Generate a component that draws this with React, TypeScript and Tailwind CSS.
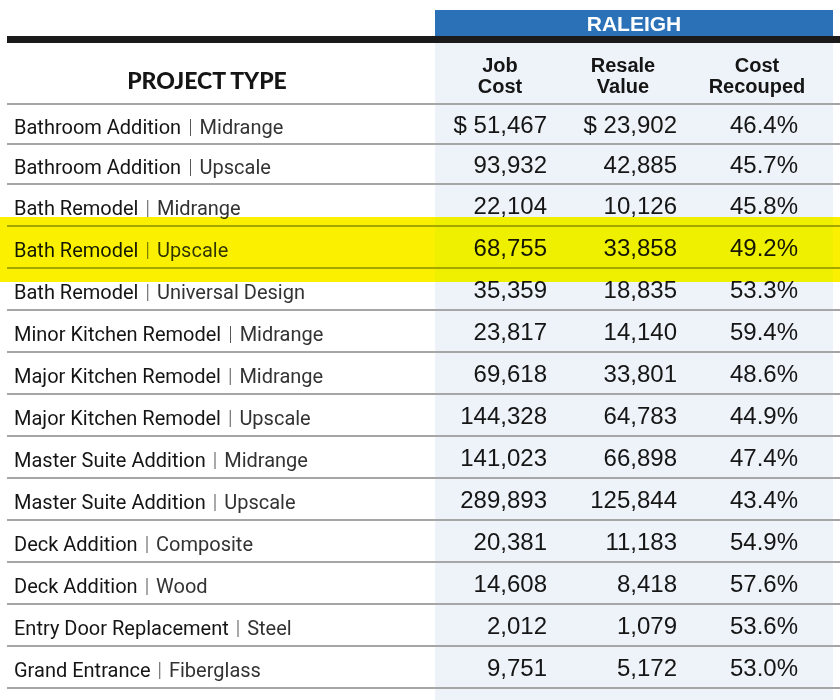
import React from "react";

type Row = {
  name: string;
  kind: string;
  job: string;
  resale: string;
  recouped: string;
};

const rows: Row[] = [
  { name: "Bathroom Addition", kind: "Midrange", job: "$ 51,467", resale: "$ 23,902", recouped: "46.4%" },
  { name: "Bathroom Addition", kind: "Upscale", job: "93,932", resale: "42,885", recouped: "45.7%" },
  { name: "Bath Remodel", kind: "Midrange", job: "22,104", resale: "10,126", recouped: "45.8%" },
  { name: "Bath Remodel", kind: "Upscale", job: "68,755", resale: "33,858", recouped: "49.2%" },
  { name: "Bath Remodel", kind: "Universal Design", job: "35,359", resale: "18,835", recouped: "53.3%" },
  { name: "Minor Kitchen Remodel", kind: "Midrange", job: "23,817", resale: "14,140", recouped: "59.4%" },
  { name: "Major Kitchen Remodel", kind: "Midrange", job: "69,618", resale: "33,801", recouped: "48.6%" },
  { name: "Major Kitchen Remodel", kind: "Upscale", job: "144,328", resale: "64,783", recouped: "44.9%" },
  { name: "Master Suite Addition", kind: "Midrange", job: "141,023", resale: "66,898", recouped: "47.4%" },
  { name: "Master Suite Addition", kind: "Upscale", job: "289,893", resale: "125,844", recouped: "43.4%" },
  { name: "Deck Addition", kind: "Composite", job: "20,381", resale: "11,183", recouped: "54.9%" },
  { name: "Deck Addition", kind: "Wood", job: "14,608", resale: "8,418", recouped: "57.6%" },
  { name: "Entry Door Replacement", kind: "Steel", job: "2,012", resale: "1,079", recouped: "53.6%" },
  { name: "Grand Entrance", kind: "Fiberglass", job: "9,751", resale: "5,172", recouped: "53.0%" },
];

const grid = "grid grid-cols-[428px_130px_116px_152px_7px]";
const num = "flex items-center justify-end bg-[#eef3f9] pt-[2px] text-[24px] text-[#151515] font-['Liberation_Sans',Arial,sans-serif]";

export default function App() {
  return (
    <div className="relative flex h-[700px] w-[840px] flex-col overflow-hidden bg-white">
      {/* city banner */}
      <div className="flex h-[36px] items-end">
        <div className="w-[435px]" />
        <div className="flex h-[26px] w-[398px] items-center justify-center bg-[#2a71b8] pt-[1px] font-['Liberation_Sans',Arial,sans-serif] text-[21px] font-bold text-white">
          RALEIGH
        </div>
      </div>
      <div className="ml-[7px] h-[7px] bg-[#1b1b1b]" />

      {/* header */}
      <div className={`${grid} ml-[7px] h-[62px] border-b-2 border-[#a6a6a6]`}>
        <div className="flex items-center justify-center pr-[28px] pt-[14px] font-['Lato',sans-serif] text-[23px] font-black text-[#151515]">
          PROJECT TYPE
        </div>
        {[["Job", "Cost"], ["Resale", "Value"], ["Cost", "Recouped"]].map(([a, b]) => (
          <div
            key={a + b}
            className="flex flex-col items-center justify-center bg-[#eef3f9] pt-[6px] font-['Liberation_Sans',Arial,sans-serif] text-[20px] font-bold leading-[21px] text-[#151515]"
          >
            <span>{a}</span>
            <span>{b}</span>
          </div>
        ))}
        <div />
      </div>

      {/* rows */}
      {rows.map((r, i) => (
        <div
          key={r.name + r.kind}
          className={`${grid} ml-[7px] border-b-2 border-[#a6a6a6] ${i < 2 ? "h-[40px]" : "h-[42px]"}`}
        >
          <div className="flex items-center pl-[7px] pt-[6px] font-['Roboto',sans-serif] text-[20px] text-[#151515]">
            <span>{r.name}</span>
            <span className="mx-[7px] font-light text-[#555]">|</span>
            <span className="text-[#333]">{r.kind}</span>
          </div>
          <div className={`${num} pr-[18px]`}>{r.job}</div>
          <div className={`${num} pr-[4px]`}>{r.resale}</div>
          <div className={`${num} pr-[35px]`}>{r.recouped}</div>
          <div />
        </div>
      ))}
      <div className={`${grid} ml-[7px] flex-1`}>
        <div />
        <div className="bg-[#eef3f9]" />
        <div className="bg-[#eef3f9]" />
        <div className="bg-[#eef3f9]" />
        <div />
      </div>

      {/* highlighter stroke over Bath Remodel | Upscale */}
      <div className="pointer-events-none absolute left-0 right-0 top-[217px] h-[65px] bg-[#fbf000] mix-blend-darken" />
    </div>
  );
}
